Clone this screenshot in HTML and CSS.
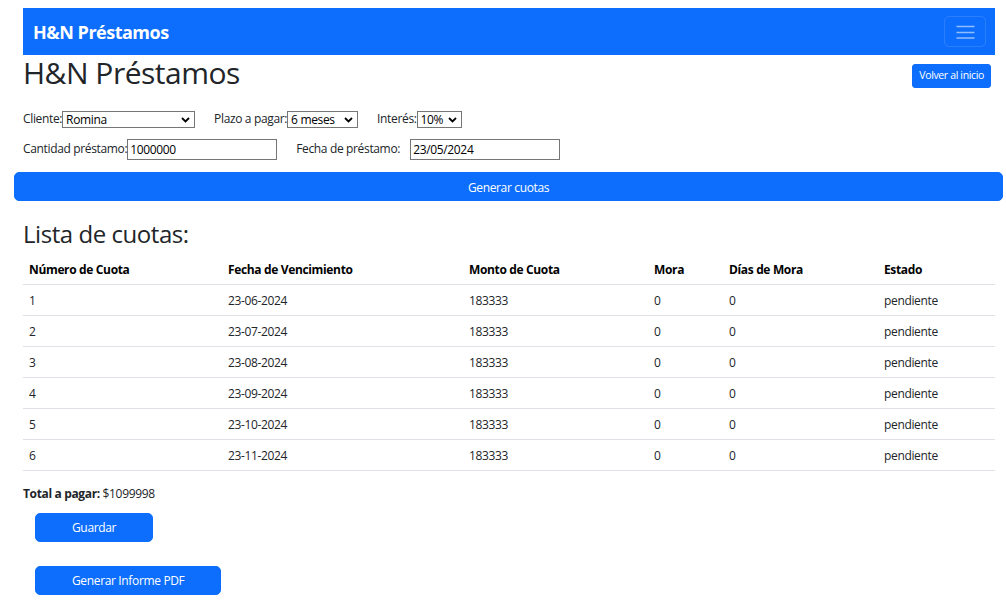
FILE: index.html
```html
<!DOCTYPE html>
<html lang="es">
<head>
<meta charset="utf-8">
<title>H&amp;N Préstamos</title>
<link rel="stylesheet" href="styles.css">
</head>
<body>
<div class="page">
  <nav class="navbar">
    <span class="brand">H&amp;N Préstamos</span>
    <button class="toggler" type="button" aria-label="Menú">
      <svg width="19" height="14" viewBox="0 0 19 14"><path d="M0.5 1.5h18M0.5 7.5h18M0.5 13h18" stroke="rgba(255,255,255,0.55)" stroke-width="1.6" fill="none"/></svg>
    </button>
  </nav>

  <div class="title-row">
    <h1>H&amp;N Préstamos</h1>
    <a class="btn btn-sm" href="#">Volver al inicio</a>
  </div>

  <form class="loan-form">
    <div class="form-row row-1">
      <label class="field">Cliente:<span class="select-wrap sel-cliente"><select><option>Romina</option></select><svg class="chev" width="9" height="6" viewBox="0 0 9 6"><path d="M1 1l3.5 3.5L8 1" stroke="#000" stroke-width="1.8" fill="none"/></svg></span></label>
      <label class="field">Plazo a pagar:<span class="select-wrap sel-plazo"><select><option>6 meses</option></select><svg class="chev" width="9" height="6" viewBox="0 0 9 6"><path d="M1 1l3.5 3.5L8 1" stroke="#000" stroke-width="1.8" fill="none"/></svg></span></label>
      <label class="field">Interés:<span class="select-wrap sel-interes"><select><option>10%</option></select><svg class="chev" width="9" height="6" viewBox="0 0 9 6"><path d="M1 1l3.5 3.5L8 1" stroke="#000" stroke-width="1.8" fill="none"/></svg></span></label>
    </div>
    <div class="form-row row-2">
      <label class="field">Cantidad préstamo:<input class="text-input" type="text" value="1000000"></label>
      <label class="field field-date"><span class="date-label">Fecha de préstamo:</span><input class="text-input" type="text" value="23/05/2024"></label>
    </div>
    <button class="btn btn-block" type="button">Generar cuotas</button>
  </form>

  <h2>Lista de cuotas:</h2>

  <table class="cuotas">
    <colgroup>
      <col class="c1"><col class="c2"><col class="c3"><col class="c4"><col class="c5"><col class="c6">
    </colgroup>
    <thead>
      <tr><th>Número de Cuota</th><th>Fecha de Vencimiento</th><th>Monto de Cuota</th><th>Mora</th><th>Días de Mora</th><th>Estado</th></tr>
    </thead>
    <tbody>
      <tr><td>1</td><td>23-06-2024</td><td>183333</td><td>0</td><td>0</td><td>pendiente</td></tr>
      <tr><td>2</td><td>23-07-2024</td><td>183333</td><td>0</td><td>0</td><td>pendiente</td></tr>
      <tr><td>3</td><td>23-08-2024</td><td>183333</td><td>0</td><td>0</td><td>pendiente</td></tr>
      <tr><td>4</td><td>23-09-2024</td><td>183333</td><td>0</td><td>0</td><td>pendiente</td></tr>
      <tr><td>5</td><td>23-10-2024</td><td>183333</td><td>0</td><td>0</td><td>pendiente</td></tr>
      <tr><td>6</td><td>23-11-2024</td><td>183333</td><td>0</td><td>0</td><td>pendiente</td></tr>
    </tbody>
  </table>

  <p class="total"><strong>Total a pagar:</strong> $1099998</p>

  <div class="actions">
    <button class="btn btn-wide" type="button">Guardar</button>
    <button class="btn btn-wide" type="button">Generar Informe PDF</button>
  </div>
</div>
</body>
</html>
```

FILE: styles.css
```css
* { box-sizing: border-box; }

body {
  margin: 0;
  font-family: "Open Sans", "Noto Sans", sans-serif;
  font-size: 12px;
  line-height: 1.5;
  letter-spacing: -0.35px;
  color: #212529;
  background: #fff;
}

.page {
  padding: 8px 11px 0 23px;
}

.navbar {
  background: #0d6efd;
  height: 47px;
  display: flex;
  align-items: center;
  justify-content: space-between;
  padding: 0 9px 0 10px;
}

.brand {
  color: #fff;
  font-weight: 700;
  font-size: 18px;
  line-height: 1;
  letter-spacing: -0.5px;
}

.toggler {
  width: 42px;
  height: 31px;
  padding: 0;
  border: 1px solid rgba(255, 255, 255, 0.12);
  border-radius: 5px;
  background: transparent;
  display: flex;
  align-items: center;
  justify-content: center;
}

.title-row {
  display: flex;
  justify-content: space-between;
  align-items: flex-start;
}

h1 {
  margin: 0;
  font-size: 30px;
  font-weight: 500;
  line-height: 36px;
  letter-spacing: -0.5px;
}

.btn {
  display: inline-block;
  font-family: inherit;
  letter-spacing: inherit;
  color: #fff;
  background: #0d6efd;
  border: 1px solid #0d6efd;
  text-decoration: none;
  text-align: center;
  cursor: pointer;
}

.btn-sm {
  margin: 9px 4px 0 0;
  font-size: 10.5px;
  line-height: 15.75px;
  padding: 3px 6px;
  border-radius: 3px;
}

.form-row {
  display: flex;
  align-items: center;
}

.row-1 {
  margin-top: 18px;
  height: 20px;
}

.row-2 {
  margin-top: 9px;
  height: 22px;
}

.field {
  display: flex;
  align-items: center;
  margin-right: 19px;
}

.select-wrap {
  position: relative;
  display: inline-block;
}

.select-wrap select {
  appearance: none;
  -webkit-appearance: none;
  display: block;
  height: 17px;
  padding: 0 0 0 3px;
  border: 1px solid #767676;
  border-radius: 0;
  background: #fff;
  font-family: inherit;
  letter-spacing: inherit;
  font-size: 12px;
  line-height: 15px;
  color: #000;
}

.sel-cliente select { width: 133px; }
.sel-plazo select { width: 71px; }
.sel-interes select { width: 45px; }

.chev {
  position: absolute;
  right: 5px;
  top: 6px;
  pointer-events: none;
}

.text-input {
  width: 150px;
  height: 21px;
  padding: 1px 2px 0;
  border: 1px solid #767676;
  border-radius: 0;
  font-family: inherit;
  letter-spacing: inherit;
  font-size: 12px;
  color: #000;
}

.date-label {
  width: 114px;
}

.btn-block {
  display: block;
  width: calc(100% + 17px);
  margin: 12px 0 0 -9px;
  height: 29px;
  font-size: 12px;
  line-height: 18px;
  padding: 5.5px 9px 3.5px;
  border-radius: 5px;
}

h2 {
  margin: 19px 0 5px;
  font-size: 24px;
  font-weight: 500;
  line-height: 28.8px;
  letter-spacing: -0.45px;
}

.cuotas {
  width: 100%;
  border-collapse: collapse;
  table-layout: fixed;
  margin-bottom: 14px;
}

.c1 { width: 199px; }
.c2 { width: 241px; }
.c3 { width: 185px; }
.c4 { width: 75px; }
.c5 { width: 155px; }
.c6 { width: 117px; }

.cuotas th,
.cuotas td {
  padding: 7px 6px 5px;
  text-align: left;
  border-bottom: 1px solid #dee2e6;
  line-height: 18px;
  white-space: nowrap;
}

.cuotas th {
  font-weight: 700;
  color: #000;
}

.total {
  margin: 0 0 10px;
}

.actions {
  display: flex;
  flex-direction: column;
  align-items: flex-start;
  gap: 24px;
  margin-left: 12px;
}

.btn-wide {
  font-size: 12px;
  line-height: 18px;
  padding: 5.5px 36px 3.5px;
  border-radius: 5px;
}
```
